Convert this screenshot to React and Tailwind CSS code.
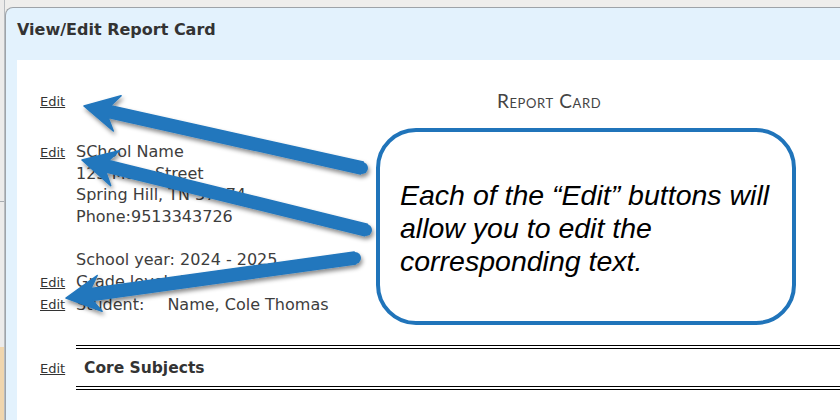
import React from 'react';

const ARROWS = [
  { tail: [362, 168], tip: [84, 106] },
  { tail: [366, 230], tip: [82, 160] },
  { tail: [355, 258], tip: [66, 298] },
];

function arrowPoints({ tail, tip }, shaftW = 12, headLen = 34, headW = 36, notch = 8) {
  const dx = tail[0] - tip[0];
  const dy = tail[1] - tip[1];
  const len = Math.hypot(dx, dy);
  const ux = dx / len;
  const uy = dy / len;
  const px = -uy;
  const py = ux;
  const at = (d, w) => [tip[0] + ux * d + px * w, tip[1] + uy * d + py * w];
  const pts = [
    tip,
    at(headLen, headW / 2),
    at(headLen - notch, shaftW / 2),
    [tail[0] + px * (shaftW / 2), tail[1] + py * (shaftW / 2)],
    [tail[0] - px * (shaftW / 2), tail[1] - py * (shaftW / 2)],
    at(headLen - notch, -shaftW / 2),
    at(headLen, -headW / 2),
  ];
  return pts.map((p) => p.map((n) => n.toFixed(1)).join(',')).join(' ');
}

function EditLink() {
  return (
    <span className="block w-[59px] shrink-0 pl-[23px]">
      <a className="text-[13px] text-[#333] underline">Edit</a>
    </span>
  );
}

export default function App() {
  return (
    <div className="relative flex h-[420px] w-[840px] overflow-hidden bg-[#efeeec] font-['DejaVu_Sans',sans-serif] text-[#3d3d3d]">
      <div className="flex w-[5px] shrink-0 flex-col border-r border-[#b8bcc0]">
        <div className="h-[201px] bg-[#ecebea]" />
        <div className="h-px bg-[#a8acb0]" />
        <div className="h-[145px] bg-[#ecebea]" />
        <div className="flex-1 bg-[#f0d6ae]" />
      </div>

      <div className="flex flex-1 flex-col pt-[7px]">
        <div className="flex flex-1 flex-col rounded-tl-[8px] border-l border-t border-[#9ea3a8] bg-[#e3f2fd]">
          <div className="h-[52px] pl-[11px] pt-[10px]">
            <h1 className="text-[16px] font-bold text-[#333]">View/Edit Report Card</h1>
          </div>

          <div className="ml-[11px] flex-1 bg-white pt-[30px] text-[16px] leading-[21.5px]">
            <div className="flex h-[22px] items-center">
              <EditLink />
              <div className="ml-[421px] font-['Lato',sans-serif] text-[19px] tracking-[0.6px] text-[#444] [font-variant:small-caps]">
                Report Card
              </div>
            </div>

            <div className="mt-[29px] flex items-start">
              <div className="flex h-[21.5px] items-center">
                <EditLink />
              </div>
              <div>
                <div>SChool Name</div>
                <div>123 Main Street</div>
                <div>Spring Hill, TN 37174</div>
                <div>Phone:9513343726</div>
              </div>
            </div>

            <div className="mt-[22px] flex">
              <div className="w-[59px] shrink-0" />
              <div>School year: 2024 - 2025</div>
            </div>
            <div className="flex items-center">
              <EditLink />
              <div>Grade level: 9</div>
            </div>
            <div className="flex items-center">
              <EditLink />
              <div>
                Student:<span className="ml-[23px]">Name, Cole Thomas</span>
              </div>
            </div>

            <div className="mt-[29px] flex items-center">
              <span className="block pt-[3px]">
                <EditLink />
              </span>
              <div className="flex h-[45px] flex-1 items-center border-y-[4px] border-double border-black pl-[8px] pt-[3px] text-[15.5px] font-bold text-[#333]">
                Core Subjects
              </div>
            </div>
          </div>
        </div>
      </div>

      <svg className="pointer-events-none absolute inset-0" width="840" height="420" viewBox="0 0 840 420">
        <defs>
          <filter id="shadow" x="-10%" y="-30%" width="120%" height="160%">
            <feDropShadow dx="1.5" dy="3" stdDeviation="2" floodColor="#000" floodOpacity="0.45" />
          </filter>
        </defs>
        <g fill="#2277bd" filter="url(#shadow)">
          {ARROWS.map((a, i) => (
            <g key={i}>
              <polygon points={arrowPoints(a)} strokeLinejoin="round" stroke="#2277bd" strokeWidth="1.5" />
              <circle cx={a.tail[0]} cy={a.tail[1]} r="6" />
            </g>
          ))}
        </g>
      </svg>

      <div className="absolute left-[376px] top-[128px] flex h-[197px] w-[420px] items-center rounded-[40px] border-[4px] border-[#2074ba] bg-white pl-[20px] pt-[4px]">
        <p className="font-['Liberation_Sans',Arial,sans-serif] text-[28.5px] italic leading-[33px] text-black">
          Each of the “Edit” buttons will
          <br />
          allow you to edit the
          <br />
          corresponding text.
        </p>
      </div>
    </div>
  );
}
